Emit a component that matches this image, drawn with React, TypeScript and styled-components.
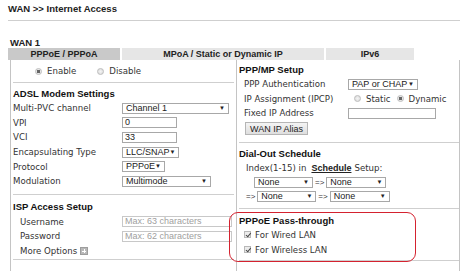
import styled, { createGlobalStyle } from 'styled-components';

const GlobalStyle = createGlobalStyle`
  html, body {
    margin: 0;
    padding: 0;
    background: #fff;
    overflow: hidden;
  }
  body {
    font-family: "Liberation Sans", Arial, sans-serif;
    color: #222;
  }
`;

const Page = styled.div`
  width: 474px;
  height: 271px;
  padding: 0 14px 0 8px;
  box-sizing: border-box;
`;

const Title = styled.div`
  font-size: 9.5px;
  font-weight: bold;
  color: #222;
  height: 20px;
  line-height: 17px;
  border-bottom: 1px solid #cfcfcf;
`;

const WanLabel = styled.div`
  margin-top: 16px;
  padding-left: 2px;
  font-size: 9.5px;
  font-weight: bold;
  line-height: 11px;
`;

const Tabs = styled.div`
  display: flex;
  gap: 2px;
  height: 12px;
`;

const Tab = styled.div<{ active?: boolean; w: number }>`
  width: ${p => p.w}px;
  background: ${p => (p.active ? '#c9c9c9' : '#e6e6e6')};
  font-size: 9px;
  font-weight: bold;
  text-align: center;
  line-height: 12px;
  color: #222;
`;

const Panel = styled.div`
  margin-left: 2px;
  display: grid;
  grid-template-columns: 226px 224px;
  border-left: 1px solid #c4c4c4;
  border-right: 1px solid #c4c4c4;
  height: 212px;
`;

const Column = styled.div<{ divider?: boolean }>`
  display: flex;
  flex-direction: column;
  border-right: ${p => (p.divider ? '1px solid #c4c4c4' : 'none')};
  padding: 0 2px;
`;

const Rule = styled.div`
  border-top: 1px solid #cfcfcf;
`;

const Heading = styled.div<{ h?: number }>`
  font-size: 9.5px;
  font-weight: bold;
  height: ${p => p.h ?? 14}px;
  line-height: ${p => p.h ?? 14}px;
  color: #111;
`;

const Row = styled.div<{ labelW?: number; indent?: number }>`
  display: grid;
  grid-template-columns: ${p => p.labelW ?? 109}px 1fr;
  align-items: center;
  height: 14.6px;
  padding-left: ${p => p.indent ?? 0}px;
`;

const Label = styled.span`
  font-family: "DejaVu Sans", Verdana, sans-serif;
  font-size: 8.6px;
  color: #333;
  white-space: nowrap;
`;

const SelectBox = styled.div<{ w: number }>`
  width: ${p => p.w}px;
  height: 11px;
  box-sizing: border-box;
  border: 1px solid #a8a8a8;
  background: #fff;
  font-size: 9px;
  line-height: 9px;
  padding: 0 3px;
  display: flex;
  justify-content: space-between;
  align-items: center;
  color: #222;
  white-space: nowrap;
`;

const Caret = styled.span`
  font-size: 6px;
  color: #222;
`;

const TextBox = styled.div<{ w: number }>`
  width: ${p => p.w}px;
  height: 11px;
  box-sizing: border-box;
  border: 1px solid #a8a8a8;
  background: #fff;
  font-size: 9px;
  line-height: 9px;
  padding: 0 2px;
  color: #222;
`;

const Placeholder = styled(TextBox)`
  color: #a0a0a0;
  border-color: #c8c8c8;
`;

const Radio = styled.span<{ on?: boolean }>`
  display: inline-block;
  width: 7px;
  height: 7px;
  border-radius: 50%;
  box-sizing: border-box;
  border: 1px solid #bdbdbd;
  background: ${p =>
    p.on
      ? 'radial-gradient(circle, #666 0 1.6px, #e8e8e8 2px)'
      : 'radial-gradient(circle, #f4f4f4, #d8d8d8)'};
  margin-right: 5px;
  vertical-align: middle;
`;

const Check = styled.span`
  display: inline-block;
  width: 7px;
  height: 7px;
  box-sizing: border-box;
  border: 1px solid #b8b8b8;
  background: #ececec;
  position: relative;
  margin-right: 4px;
  vertical-align: middle;
  &::after {
    content: '';
    position: absolute;
    left: 1.5px;
    top: 0px;
    width: 2px;
    height: 3.5px;
    border: solid #444;
    border-width: 0 1px 1px 0;
    transform: rotate(40deg);
  }
`;

const RadioRow = styled.div<{ h?: number; indent?: number }>`
  display: flex;
  align-items: center;
  height: ${p => p.h ?? 14.6}px;
  padding-left: ${p => p.indent ?? 0}px;
  gap: 0;
`;

const Option = styled.span<{ gap?: number }>`
  display: inline-flex;
  align-items: center;
  margin-right: ${p => p.gap ?? 0}px;
`;

const Btn = styled.div`
  display: inline-block;
  margin: 1px 0 0 6px;
  height: 13px;
  padding: 0 4px;
  line-height: 12px;
  box-sizing: border-box;
  border: 1px solid #b5b5b5;
  background: linear-gradient(#f4f4f4, #dedede);
  font-size: 9px;
  color: #222;
  align-self: flex-start;
`;

const Arrow = styled.span`
  font-size: 8px;
  color: #333;
  margin: 0 2px;
  font-family: "Liberation Sans", Arial, sans-serif;
`;

const Flow = styled.div<{ indent?: number }>`
  display: flex;
  align-items: center;
  height: 14.3px;
  padding-left: ${p => p.indent ?? 0}px;
`;

const SchedLink = styled.span`
  font-family: "Liberation Sans", Arial, sans-serif;
  font-weight: bold;
  font-size: 9px;
  text-decoration: underline;
  color: #222;
  margin: 0 3px 0 5px;
`;

const PlusIcon = styled.span`
  display: inline-block;
  width: 8px;
  height: 8px;
  margin-left: 3px;
  background: #b8b8b8;
  border: 1px solid #9d9d9d;
  box-sizing: border-box;
  position: relative;
  vertical-align: middle;
  &::before, &::after {
    content: '';
    position: absolute;
    background: #fff;
  }
  &::before { left: 1px; right: 1px; top: 2.5px; height: 1px; }
  &::after { top: 1px; bottom: 1px; left: 2.5px; width: 1px; }
`;

const Highlight = styled.div`
  position: relative;
`;

const RedFrame = styled.div`
  position: absolute;
  left: -10px;
  top: 3px;
  width: 185px;
  height: 48px;
  border: 1.5px solid #d4222f;
  border-radius: 9px;
  pointer-events: none;
`;

const Spacer = styled.div<{ h: number }>`
  height: ${p => p.h}px;
`;

function Select({ w, text }: { w: number; text: string }) {
  return (
    <SelectBox w={w}>
      <span>{text}</span>
      <Caret>▼</Caret>
    </SelectBox>
  );
}

export default function App() {
  return (
    <Page>
      <GlobalStyle />
      <Title>WAN &gt;&gt; Internet Access</Title>
      <WanLabel>WAN 1</WanLabel>
      <Tabs>
        <Tab active w={112}>PPPoE / PPPoA</Tab>
        <Tab w={202}>MPoA / Static or Dynamic IP</Tab>
        <Tab w={88}>IPv6</Tab>
      </Tabs>
      <Panel>
        <Column divider>
          <RadioRow h={22} indent={22}>
            <Option gap={21}><Radio on /><Label>Enable</Label></Option>
            <Option><Radio /><Label>Disable</Label></Option>
          </RadioRow>
          <Rule />
          <Spacer h={4} />
          <Heading>ADSL Modem Settings</Heading>
          <Row>
            <Label>Multi-PVC channel</Label>
            <Select w={107} text="Channel 1" />
          </Row>
          <Row>
            <Label>VPI</Label>
            <TextBox w={55}>0</TextBox>
          </Row>
          <Row>
            <Label>VCI</Label>
            <TextBox w={55}>33</TextBox>
          </Row>
          <Row>
            <Label>Encapsulating Type</Label>
            <Select w={57} text="LLC/SNAP" />
          </Row>
          <Row>
            <Label>Protocol</Label>
            <Select w={43} text="PPPoE" />
          </Row>
          <Row>
            <Label>Modulation</Label>
            <Select w={89} text="Multimode" />
          </Row>
          <Spacer h={5} />
          <Rule />
          <Spacer h={5} />
          <Heading>ISP Access Setup</Heading>
          <Spacer h={1} />
          <Row indent={7} labelW={102}>
            <Label>Username</Label>
            <Placeholder w={110}>Max: 63 characters</Placeholder>
          </Row>
          <Row indent={7} labelW={102}>
            <Label>Password</Label>
            <Placeholder w={110}>Max: 62 characters</Placeholder>
          </Row>
          <RadioRow indent={7}>
            <Label>More Options</Label>
            <PlusIcon />
          </RadioRow>
          <Spacer h={1} />
          <Rule />
        </Column>
        <Column>
          <Spacer h={3} />
          <Heading>PPP/MP Setup</Heading>
          <Row indent={5} labelW={104}>
            <Label>PPP Authentication</Label>
            <Select w={70} text="PAP or CHAP" />
          </Row>
          <Row indent={5} labelW={104}>
            <Label>IP Assignment (IPCP)</Label>
            <RadioRow indent={6}>
              <Option gap={6}><Radio /><Label>Static</Label></Option>
              <Option><Radio on /><Label>Dynamic</Label></Option>
            </RadioRow>
          </Row>
          <Row indent={5} labelW={104}>
            <Label>Fixed IP Address</Label>
            <TextBox w={88} />
          </Row>
          <Btn>WAN IP Alias</Btn>
          <Spacer h={7} />
          <Rule />
          <Spacer h={4} />
          <Heading>Dial-Out Schedule</Heading>
          <Flow indent={7}>
            <Label>Index(1-15) in</Label>
            <SchedLink>Schedule</SchedLink>
            <Label>Setup:</Label>
          </Flow>
          <Flow indent={15}>
            <Select w={59} text="None" />
            <Arrow>=&gt;</Arrow>
            <Select w={60} text="None" />
          </Flow>
          <Flow indent={5}>
            <Arrow>=&gt;</Arrow>
            <Select w={59} text="None" />
            <Arrow>=&gt;</Arrow>
            <Select w={60} text="None" />
          </Flow>
          <Spacer h={4} />
          <Rule />
          <Highlight>
            <RedFrame />
            <Spacer h={5} />
            <Heading>PPPoE Pass-through</Heading>
            <RadioRow indent={5}>
              <Check /><Label>For Wired LAN</Label>
            </RadioRow>
            <RadioRow indent={5}>
              <Check /><Label>For Wireless LAN</Label>
            </RadioRow>
            <Spacer h={3} />
            <Rule />
          </Highlight>
        </Column>
      </Panel>
    </Page>
  );
}
